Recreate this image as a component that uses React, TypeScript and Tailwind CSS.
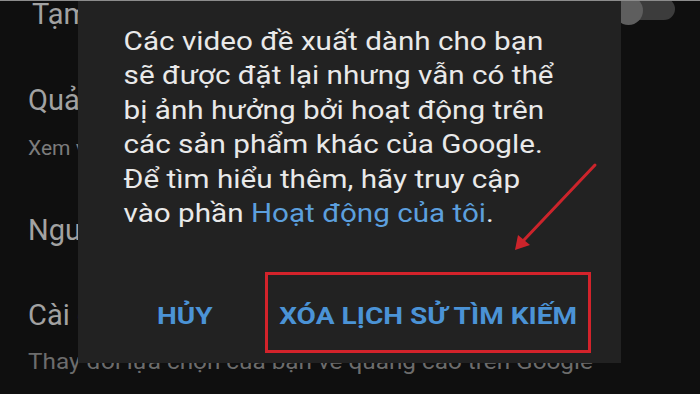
import React from 'react';

const font = { fontFamily: 'Roboto, "Noto Sans", sans-serif' };

export default function App() {
  return (
    <div className="relative w-[700px] h-[394px] overflow-hidden bg-[#0f0f0f]" style={font}>
      {/* settings list behind dialog */}
      <div className="flex flex-col pl-[28px]">
        <p className="mt-[-3px] h-[34px] pl-[4px] text-[29px] leading-[34px] text-[#a2a2a2] whitespace-nowrap">Tạm dừng nhật ký tìm kiếm</p>
        <p className="mt-[52px] h-[34px] text-[29px] leading-[34px] text-[#a2a2a2] whitespace-nowrap">Quản lý toàn bộ lịch sử</p>
        <p className="mt-[19px] h-[24px] text-[21px] leading-[24px] text-[#7c7c7c] whitespace-nowrap">Xem và xóa hoạt động của bạn</p>
        <p className="mt-[53px] h-[34px] text-[29px] leading-[34px] text-[#a2a2a2] whitespace-nowrap">Nguồn cấp dữ liệu</p>
        <p className="mt-[51px] h-[34px] text-[29px] leading-[34px] text-[#a2a2a2] whitespace-nowrap">Cài đặt quảng cáo</p>
        <p className="mt-[18px] h-[24px] text-[21.5px] leading-[24px] text-[#6c6c6c] whitespace-nowrap origin-left scale-x-[1.13]">Thay đổi lựa chọn của bạn về quảng cáo trên Google</p>
      </div>

      {/* toggle switch, top right */}
      <div className="absolute left-[625px] top-[-2px] w-[50px] h-[22px] rounded-full bg-[#3c3c3c]" />
      <div className="absolute left-[614px] top-[-4px] w-[29px] h-[29px] rounded-full bg-[#5e5e5e]" />

      {/* thin line at top of screenshot */}
      <div className="absolute left-0 top-0 w-full h-[1px] bg-[#8c8c8c] z-20" />

      {/* dialog */}
      <div className="absolute z-10 left-[78px] top-[-20px] w-[543px] h-[383px] bg-[#222222] flex flex-col">
        <p className="pl-[40px] pt-[44px] text-[26px] leading-[34.4px] text-[#e9e9e9] whitespace-nowrap origin-left scale-x-[1.14]">
          Các video đề xuất dành cho bạn
          <br />
          sẽ được đặt lại nhưng vẫn có thể
          <br />
          bị ảnh hưởng bởi hoạt động trên
          <br />
          các sản phẩm khác của Google.
          <br />
          Để tìm hiểu thêm, hãy truy cập
          <br />
          vào phần <span className="text-[#5c9fdd]">Hoạt động của tôi</span>.
        </p>
        <div className="mt-auto mb-[10px] flex items-center justify-end pr-[30px] gap-[40px]">
          <div className="w-[80px] pt-[10px] text-center">
            <span className="inline-block text-[23px] font-bold text-[#4b93d6] scale-x-[1.22]">HỦY</span>
          </div>
          <div className="w-[326px] h-[81px] pt-[10px] border-[3px] border-[#d3232b] flex items-center justify-center">
            <span className="inline-block text-[23px] font-bold text-[#4b93d6] whitespace-nowrap scale-x-[1.22]">XÓA LỊCH SỬ TÌM KIẾM</span>
          </div>
        </div>
      </div>

      {/* red annotation arrow */}
      <svg className="absolute z-20 left-0 top-0" width="700" height="394" viewBox="0 0 700 394">
        <line x1="595" y1="165" x2="524" y2="240" stroke="#cc242b" strokeWidth="3" strokeLinecap="round" />
        <polygon points="515,250 518,235 530,245" fill="#cc242b" />
      </svg>
    </div>
  );
}
